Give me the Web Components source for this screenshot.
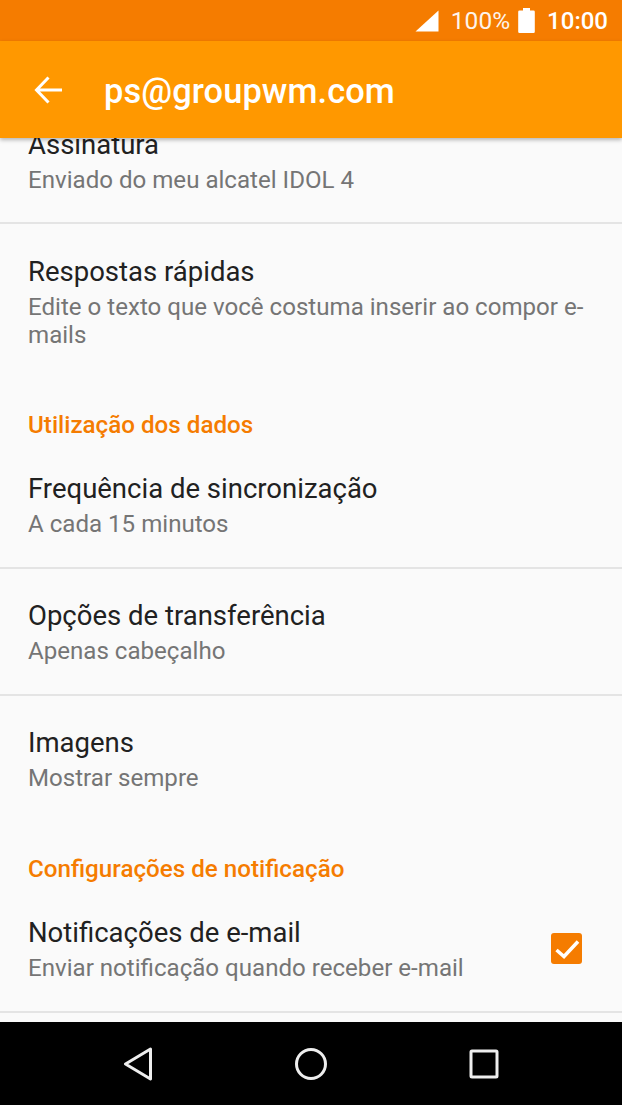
<!DOCTYPE html>
<html><head><meta charset="utf-8"><style>
html,body{margin:0;padding:0;background:#fafafa}
body{width:622px;height:1105px;overflow:hidden;font-family:Roboto,sans-serif}
app-screen{height:1105px}
</style></head><body>
<app-screen>
  <status-bar></status-bar>
  <app-bar title="ps@groupwm.com"></app-bar>
  <pref-list>
    <pref-row first divider title="Assinatura" sub="Enviado do meu alcatel IDOL 4"></pref-row>
    <pref-row title="Respostas rápidas" sub="Edite o texto que você costuma inserir ao compor e-mails" style="--h:155px;--pt:30px"></pref-row>
    <pref-heading>Utilização dos dados</pref-heading>
    <pref-row divider title="Frequência de sincronização" sub="A cada 15 minutos"></pref-row>
    <pref-row divider title="Opções de transferência" sub="Apenas cabeçalho"></pref-row>
    <pref-row title="Imagens" sub="Mostrar sempre"></pref-row>
    <pref-heading>Configurações de notificação</pref-heading>
    <pref-row divider checked title="Notificações de e-mail" sub="Enviar notificação quando receber e-mail"></pref-row>
  </pref-list>
  <nav-bar></nav-bar>
</app-screen>
<script>
function def(name,html,setup){
  customElements.define(name,class extends HTMLElement{
    connectedCallback(){
      if(this.shadowRoot)return;
      const r=this.attachShadow({mode:'open'});
      r.innerHTML=html;
      if(setup)setup.call(this,r);
    }
  });
}
def('app-screen',`<style>:host{display:flex;flex-direction:column;width:622px;position:relative;overflow:hidden}</style><slot></slot>`);
def('status-bar',`<style>:host{display:flex;align-items:center;justify-content:flex-end;height:41px;background:#f57c00;color:#fff;box-sizing:border-box;padding:0 14px 0 0;flex:none}
.p{font-size:24.500px;margin:0 8px 0 12px;opacity:.92;letter-spacing:0}.t{font-size:24px;font-weight:500;margin-left:12px}svg{display:block}</style>
<svg width="24" height="22" viewBox="0 0 24 22"><path d="M0.500 21.500 23.500 0.500V21.500Z" fill="#fff"/></svg><span class="p">100%</span>
<svg width="17" height="25" viewBox="0 0 17 25"><path d="M5 0h7v2.500h3.500a1.300 1.300 0 0 1 1.300 1.300v19.900a1.300 1.300 0 0 1-1.300 1.300H1.500a1.300 1.300 0 0 1-1.300-1.300V3.800A1.300 1.300 0 0 1 1.500 2.500H5Z" fill="#fff"/></svg><span class="t">10:00</span>`);
def('app-bar',`<style>:host{display:flex;align-items:center;height:97px;background:#ff9800;color:#fff;flex:none;position:relative;z-index:2;box-shadow:0 2px 4px rgba(0,0,0,.28);box-sizing:border-box;padding:0 0 0 34px}
svg{display:block;flex:none}.t{font-size:34.400px;font-weight:500;margin:4px 0 0 41px;letter-spacing:.1px;line-height:1}</style>
<svg width="29" height="28" viewBox="0 0 29 28"><path d="M28 14H4M14.500 1.500 2.500 14 14.500 26.500" fill="none" stroke="#fff" stroke-width="3"/></svg><span class="t"></span>`,function(r){r.querySelector('.t').textContent=this.getAttribute('title')});
def('pref-list',`<style>:host{display:block;flex:1;min-height:0;overflow:hidden;background:#fafafa}</style><slot></slot>`);
def('pref-row',`<style>:host{display:flex;align-items:flex-start;box-sizing:border-box;height:var(--h,127px);padding:0 28px;position:relative}
:host([first]){height:86px}
:host([divider])::after{content:"";position:absolute;left:0;right:0;bottom:0;height:2px;background:#e4e4e4}
.b{flex:1;min-width:0;padding-top:var(--pt,29px)}:host([first]) .b{padding-top:0;margin-top:-11px}
.t{font-size:27.500px;line-height:36px;color:#212121}.s{font-size:24.100px;line-height:28px;color:#757575;margin-top:3px;overflow-wrap:anywhere}
.c{display:none;width:31px;height:31px;background:#f57c00;border-radius:3px;margin:47px 12px 0 0;flex:none}.c svg{display:block}
:host([checked]) .c{display:block}</style>
<div class="b"><div class="t"></div><div class="s"></div></div><div class="c"><svg width="31" height="31" viewBox="0 0 31 31"><path d="M5.500 17 13 23.500 27 8.500" fill="none" stroke="#fff" stroke-width="3.500"/></svg></div>`,function(r){r.querySelector('.t').textContent=this.getAttribute('title');r.querySelector('.s').textContent=this.getAttribute('sub')});
def('pref-heading',`<style>:host{display:block;box-sizing:border-box;height:63px;padding:32px 28px 0;font-size:24.200px;font-weight:500;line-height:28px;color:#f57c00}</style><slot></slot>`);
def('nav-bar',`<style>:host{display:flex;position:relative;height:83px;background:#000;flex:none;align-items:center;justify-content:space-between;padding:0 123px 0 123px;box-sizing:border-box}svg{display:block}</style>
<svg width="30" height="34" viewBox="0 0 30 34"><path d="M27.500 2 2.500 17l25 15Z" fill="none" stroke="#eee" stroke-width="3" stroke-linejoin="round"/></svg>
<svg width="34" height="34" viewBox="0 0 34 34"><circle cx="17" cy="17" r="14.500" fill="none" stroke="#eee" stroke-width="3"/></svg>
<svg width="30" height="30" viewBox="0 0 30 30"><rect x="2" y="2" width="26" height="26" rx="1" fill="none" stroke="#eee" stroke-width="3"/></svg>`);
</script>
</body></html>
